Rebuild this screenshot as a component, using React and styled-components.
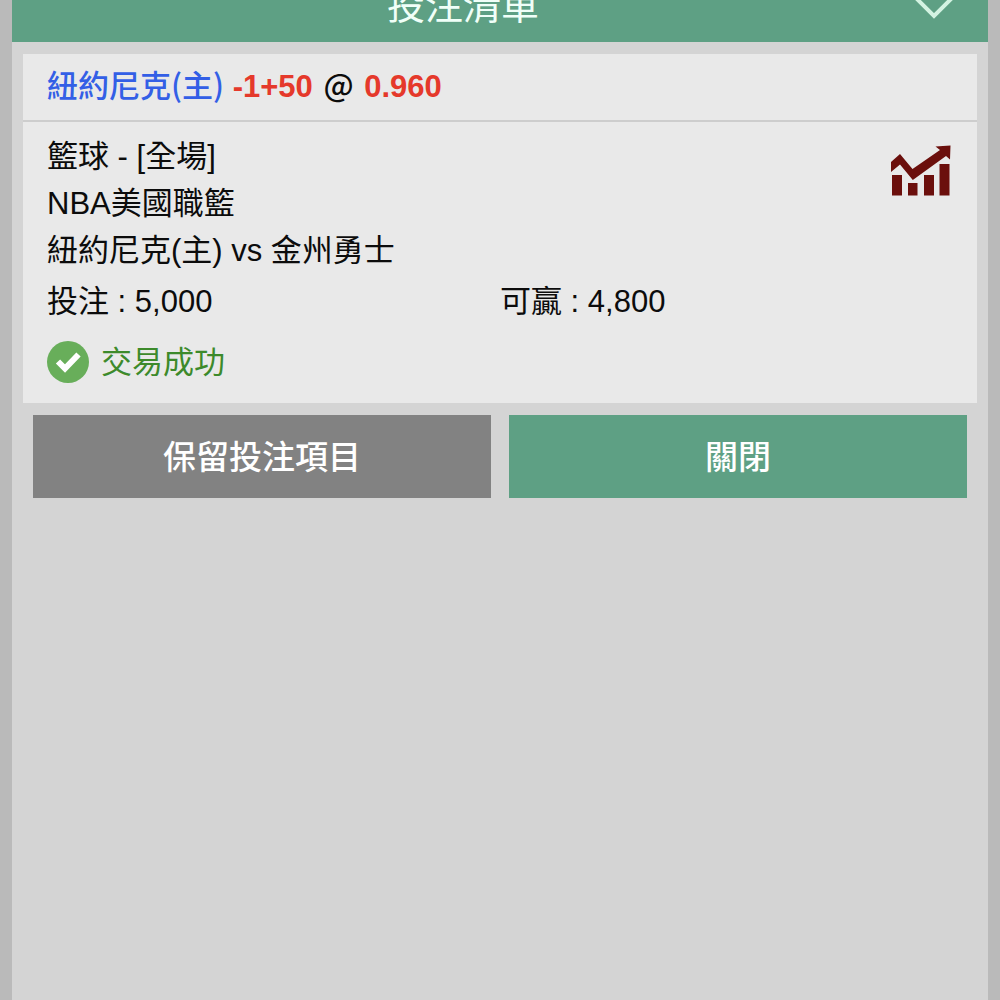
import styled, { createGlobalStyle } from 'styled-components';

export default function App() {
    const aposta = {
        time: "紐約尼克(主)",
        handicap: "-1+50",
        odd: "0.960",
        linhas: ["籃球 - [全場]", "NBA美國職籃", "紐約尼克(主) vs 金州勇士"],
        valor: "5,000",
        ganho: "4,800"
    };

    return (
        <>
            <GlobalStyle />
            <Painel lang="zh-Hant">
                <Header>
                    <Titulo>投注清單</Titulo>
                    <Recolher type="button" aria-label="收合">
                        <svg width="48" height="26" viewBox="0 0 48 26" fill="none">
                            <path d="M2 1 L24 23 L46 1" stroke="#d3f3e2" strokeWidth="4" />
                        </svg>
                    </Recolher>
                </Header>
                <Card>
                    <Selecao>
                        <Time>{aposta.time}</Time> <Odd>{aposta.handicap}</Odd> <Arroba>@</Arroba> <Odd>{aposta.odd}</Odd>
                    </Selecao>
                    <Detalhes>
                        <Topo>
                            <div>
                                {aposta.linhas.map(linha => <Linha key={linha}>{linha}</Linha>)}
                            </div>
                            <Grafico />
                        </Topo>
                        <Valores>
                            <Linha>投注 : {aposta.valor}</Linha>
                            <Linha>可贏 : {aposta.ganho}</Linha>
                        </Valores>
                        <Status>
                            <Check />
                            <Mensagem>交易成功</Mensagem>
                        </Status>
                    </Detalhes>
                </Card>
                <Botoes>
                    <Botao type="button" $cor="#828282">保留投注項目</Botao>
                    <Botao type="button" $cor="#5ea084">關閉</Botao>
                </Botoes>
            </Painel>
        </>
    );
}

function Grafico() {
    return (
        <svg width="60" height="52" viewBox="0 0 60 52" fill="#6b0f0c" aria-hidden="true">
            <path d="M0 17 L9 9 L21.500 24 L49 5 L44.500 1.500 L59.500 0.500 L59 14.500 L55 11 L21.800 35 L9 19.500 L0 27 Z" />
            <rect x="1" y="30" width="10" height="20.500" />
            <rect x="17" y="38" width="9.500" height="12.500" />
            <rect x="33" y="30" width="10" height="20.500" />
            <rect x="48.500" y="19" width="10" height="31.500" />
        </svg>
    );
}

function Check() {
    return (
        <svg width="42" height="42" viewBox="0 0 42 42" aria-hidden="true">
            <circle cx="21" cy="21" r="21" fill="#68ae5a" />
            <path d="M11 20.500 L18 27.500 L31.500 13.500" fill="none" stroke="#ffffff" strokeWidth="6" />
        </svg>
    );
}

const GlobalStyle = createGlobalStyle`
    * {
        box-sizing: border-box;
    }
    body {
        margin: 0;
        background: #bababa;
        color: #0c0c0c;
        font-family: "Liberation Sans", "Noto Sans CJK TC", sans-serif;
        font-size: 31px;
    }
    button {
        font-family: inherit;
        border: none;
        padding: 0;
        cursor: pointer;
    }
    h1, h2, p {
        margin: 0;
    }
    svg {
        display: block;
        flex-shrink: 0;
    }
`;
const Painel = styled.main`
    min-height: 100vh;
    margin: 0 12px;
    background: #d4d4d4;
    display: flow-root;
`;
/* o topo da barra fica fora da tela, como na página rolada */
const Header = styled.header`
    height: 72px;
    margin-top: -30px;
    padding: 0 30px 0 4px;
    background: #5ea084;
    display: flex;
    align-items: center;
`;
const Titulo = styled.h1`
    flex-grow: 1;
    color: #f0fff8;
    font-size: 38px;
    font-weight: normal;
    line-height: 56px;
    text-align: center;
`;
const Recolher = styled.button`
    background: none;
`;
const Card = styled.section`
    margin: 12px 11px 0;
    background: #e9e9e9;
`;
const Selecao = styled.h2`
    padding: 6px 24px 9px;
    border-bottom: 2px solid #cdcdcd;
    font-size: 31px;
    font-weight: bold;
    line-height: 48px;
`;
const Time = styled.span`
    color: #335fe6;
    font-family: "Noto Sans CJK TC", sans-serif;
    font-weight: 500;
`;
const Odd = styled.span`
    color: #e5392b;
`;
const Arroba = styled.span`
    padding: 0 2px;
    font-family: "Noto Sans CJK TC", sans-serif;
    font-weight: 500;
`;
const Detalhes = styled.div`
    padding: 11px 24px 20px;
`;
const Topo = styled.div`
    display: flex;
    justify-content: space-between;
    svg {
        margin: 12px 2px 0 0;
    }
`;
const Linha = styled.p`
    line-height: 47px;
`;
const Valores = styled.div`
    display: grid;
    grid-template-columns: 1fr 1fr;
    margin: 4px 0 16px;
`;
const Status = styled.div`
    display: flex;
    align-items: center;
    gap: 12px;
    height: 42px;
    color: #3d8a2b;
`;
const Mensagem = styled.p`
    padding-bottom: 6px;
`;
const Botoes = styled.div`
    display: grid;
    grid-template-columns: 1fr 1fr;
    gap: 18px;
    margin: 12px 21px;
`;
const Botao = styled.button`
    height: 83px;
    padding-bottom: 4px;
    background: ${props => props.$cor};
    color: #ffffff;
    font-family: "Noto Sans CJK TC", sans-serif;
    font-size: 33px;
    font-weight: 500;
`;
